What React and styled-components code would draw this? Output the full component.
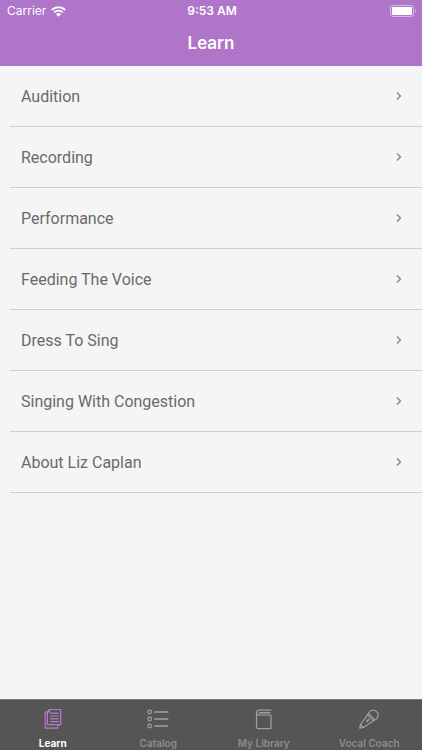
import { useState } from "react";
import styled, { createGlobalStyle } from "styled-components";

const GlobalStyle = createGlobalStyle`
  * {
    box-sizing: border-box;
  }

  body {
    margin: 0;
    background: #f5f5f5;
    font-family: Inter, "Liberation Sans", sans-serif;
  }
`;

const Screen = styled.div`
  min-height: 100vh;
  display: flex;
  flex-direction: column;
`;

const Header = styled.header`
  background: #ae75c9;
  color: #fff;
`;

const StatusBar = styled.div`
  height: 22px;
  padding: 0 5px 0 7px;
  display: grid;
  grid-template-columns: 1fr auto 1fr;
  align-items: center;
  font-size: 12px;
  line-height: 22px;
`;

const Carrier = styled.div`
  display: flex;
  align-items: center;
  gap: 5px;
`;

const Time = styled.span`
  font-weight: 600;
`;

const Battery = styled.svg`
  justify-self: end;
`;

const Title = styled.h1`
  margin: 0;
  height: 44px;
  font-size: 17px;
  font-weight: 600;
  line-height: 42px;
  text-align: center;
`;

const Main = styled.main`
  flex: 1;
`;

const List = styled.ul`
  margin: 0;
  padding: 0 0 0 10px;
  list-style: none;
`;

const Item = styled.li`
  border-bottom: 1px solid #cdcdcd;
`;

const ItemLink = styled.a`
  height: 60px;
  padding: 0 20px 0 11px;
  display: flex;
  align-items: center;
  justify-content: space-between;
  color: #6a6a6a;
  font-family: Roboto, "Liberation Sans", sans-serif;
  font-size: 16px;
  text-decoration: none;
`;

const TabBar = styled.nav`
  position: sticky;
  bottom: 0;
  height: 51px;
  display: flex;
  background: #555;
  border-top: 1px solid #7a7a7a;
`;

const Tab = styled.button`
  flex: 1 1 0;
  padding: 8px 0 0;
  display: flex;
  flex-direction: column;
  align-items: center;
  gap: 6px;
  border: 0;
  background: none;
  color: ${(props) => (props.$active ? "#b57bd0" : "#a0a0a0")};
  font-family: inherit;
  cursor: pointer;
`;

const TabLabel = styled.span`
  color: ${(props) => (props.$active ? "#fff" : "#8c8c8c")};
  font-size: 10px;
  font-weight: ${(props) => (props.$active ? 700 : 600)};
  line-height: 14px;
  white-space: nowrap;
`;

const TabIcon = ({ children }) => (
  <svg
    width="22"
    height="22"
    viewBox="0 0 22 22"
    fill="none"
    stroke="currentColor"
    strokeWidth="1.2"
    strokeLinecap="round"
    strokeLinejoin="round"
    aria-hidden="true"
  >
    {children}
  </svg>
);

const LearnIcon = () => (
  <TabIcon>
    <path d="M7.5 1.5h11.2v15.2H5.4V3.9z M5.4 3.9h2.1V1.5" />
    <path d="M5.4 4.2H3.2v15.9h12.6v-3.2" />
    <path d="M8.5 5.2h7.8M8.5 8h7.8M8.5 10.8h7.8M8.5 13.6h7.8" />
  </TabIcon>
);

const CatalogIcon = () => (
  <TabIcon>
    <circle cx="2.7" cy="4" r="1.8" />
    <circle cx="2.7" cy="11" r="1.8" />
    <circle cx="2.7" cy="18" r="1.8" />
    <path d="M7.7 4h13M7.7 11h13M7.7 18h13" strokeWidth="1.5" />
  </TabIcon>
);

const LibraryIcon = () => (
  <TabIcon>
    <path d="M18 2.2H5.8a2.3 2.3 0 0 0-2.3 2.3v13.9a2.2 2.2 0 0 0 2.2 2.2H18V7H5.8a2.3 2.3 0 0 1-2.3-2.5" />
    <path d="M6.4 4.7h10.4" strokeWidth="1.6" />
  </TabIcon>
);

const CoachIcon = () => (
  <TabIcon>
    <path d="M10.5 5.3a5 5 0 1 1 6.5 6.5z" />
    <path d="M10.5 5.3l-.9 1.5 5.9 5.9 1.5-.9" />
    <path d="M9.6 6.8L2.5 16.6l2.9 2.9 10.1-6.8M2.5 16.8l-.8 3.4 3.6-.9" />
    <path d="M9 13.3l1.8-1.8" strokeWidth="1.8" />
  </TabIcon>
);

const WifiIcon = () => (
  <svg width="15" height="11" viewBox="0 0 15 11" aria-hidden="true">
    <g fill="none" stroke="currentColor" strokeWidth="1.9">
      <path d="M.9 4a9.3 9.3 0 0 1 13.2 0" />
      <path d="M3.2 6.4a6 6 0 0 1 8.6 0" />
    </g>
    <path d="M5 8.2a3.5 3.5 0 0 1 5 0L7.5 10.8z" fill="currentColor" />
  </svg>
);

const BatteryIcon = () => (
  <Battery width="27" height="12" viewBox="0 0 27 12" aria-hidden="true">
    <rect x=".5" y=".5" width="23" height="11" rx="2.5" fill="none" stroke="#fff" strokeOpacity=".5" />
    <rect x="2" y="2" width="20" height="8" rx="1" fill="#fff" />
    <path d="M25 4.2c1.6.5 1.6 3.1 0 3.6z" fill="#fff" fillOpacity=".5" />
  </Battery>
);

const ChevronIcon = () => (
  <svg width="6" height="10" viewBox="0 0 6 10" aria-hidden="true">
    <path d="M1 1.5L4.4 5 1 8.5" fill="none" stroke="#8c8c8c" strokeWidth="1.5" />
  </svg>
);

const topics = [
  "Audition",
  "Recording",
  "Performance",
  "Feeding The Voice",
  "Dress To Sing",
  "Singing With Congestion",
  "About Liz Caplan",
];

const tabs = [
  { label: "Learn", Icon: LearnIcon },
  { label: "Catalog", Icon: CatalogIcon },
  { label: "My Library", Icon: LibraryIcon },
  { label: "Vocal Coach", Icon: CoachIcon },
];

export default function App() {
  const [current, setCurrent] = useState("Learn");

  return (
    <>
      <GlobalStyle />
      <Screen>
        <Header>
          <StatusBar>
            <Carrier>
              Carrier
              <WifiIcon />
            </Carrier>
            <Time>9:53 AM</Time>
            <BatteryIcon />
          </StatusBar>
          <Title>Learn</Title>
        </Header>
        <Main>
          <List>
            {topics.map((topic) => (
              <Item key={topic}>
                <ItemLink href="#">
                  {topic}
                  <ChevronIcon />
                </ItemLink>
              </Item>
            ))}
          </List>
        </Main>
        <TabBar>
          {tabs.map(({ label, Icon }) => (
            <Tab
              key={label}
              type="button"
              $active={label === current}
              onClick={() => setCurrent(label)}
            >
              <Icon />
              <TabLabel $active={label === current}>{label}</TabLabel>
            </Tab>
          ))}
        </TabBar>
      </Screen>
    </>
  );
}
